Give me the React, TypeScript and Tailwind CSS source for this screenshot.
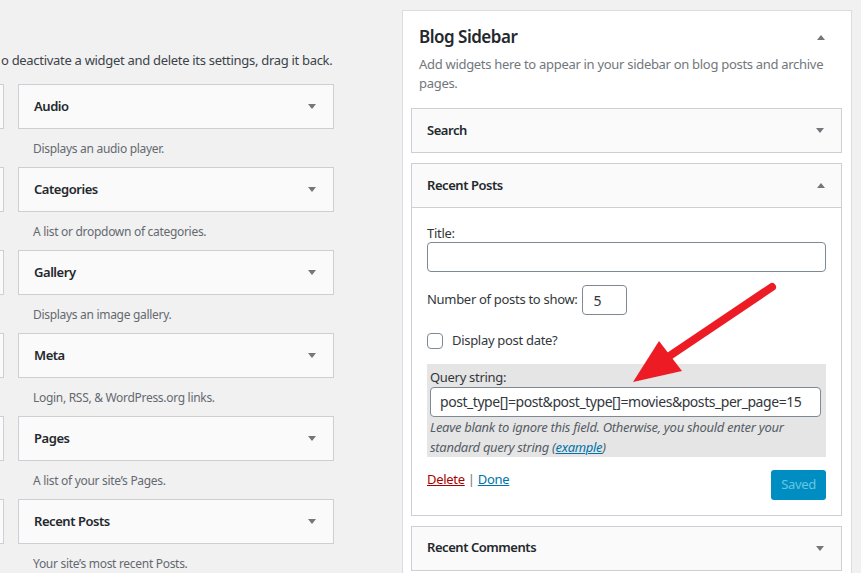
import React from "react";

const font = { fontFamily: '"Noto Sans", "Open Sans", sans-serif' };

function Caret({ up = false }: { up?: boolean }) {
  return (
    <svg width="8" height="5" viewBox="0 0 8 5" className="shrink-0">
      {up ? (
        <polygon points="0,5 8,5 4,0" fill="#72777c" />
      ) : (
        <polygon points="0,0 8,0 4,5" fill="#72777c" />
      )}
    </svg>
  );
}

function WidgetTop({ title, up = false }: { title: string; up?: boolean }) {
  return (
    <div className="h-[45px] flex items-center justify-between pl-[15px] pr-[17px] bg-[#fafafa] border border-[#ccd0d4]">
      <span className="text-[13px] font-semibold tracking-[-0.45px] text-[#23282d]">{title}</span>
      <Caret up={up} />
    </div>
  );
}

const available = [
  { title: "Audio", desc: "Displays an audio player." },
  { title: "Categories", desc: "A list or dropdown of categories." },
  { title: "Gallery", desc: "Displays an image gallery." },
  { title: "Meta", desc: "Login, RSS, & WordPress.org links." },
  { title: "Pages", desc: "A list of your site\u2019s Pages." },
  { title: "Recent Posts", desc: "Your site\u2019s most recent Posts." },
];

export default function App() {
  return (
    <div
      className="relative w-[861px] h-[573px] overflow-hidden bg-[#f1f1f1] flex tracking-[-0.3px]"
      style={font}
    >
      {/* Available widgets (left, cut off) */}
      <div className="w-[402px] shrink-0 overflow-hidden pt-[50px]">
        <p className="text-[13px] leading-[20px] text-[#3c434a] pl-[1px] whitespace-nowrap">
          o deactivate a widget and delete its settings, drag it back.
        </p>
        <div className="mt-[14px] ml-[-298px] flex gap-[14px]">
          {/* left column, only its edge shows */}
          <div className="w-[302px] shrink-0">
            {available.map((w) => (
              <div key={w.title} className="h-[83px]">
                <div className="h-[45px] bg-[#fafafa] border border-[#ccd0d4]" />
              </div>
            ))}
          </div>
          <div className="w-[316px] shrink-0">
            {available.map((w) => (
              <div key={w.title} className="h-[83px]">
                <WidgetTop title={w.title} />
                <p className="pl-[15px] pt-[10px] text-[12px] leading-[19px] text-[#646970] whitespace-nowrap">
                  {w.desc}
                </p>
              </div>
            ))}
          </div>
        </div>
      </div>

      {/* Blog Sidebar */}
      <div className="mt-[10px] w-[450px] shrink-0 self-start bg-white border border-[#dcdcde] pl-[8px] pr-[9px] pb-[20px]">
        <div className="flex items-center justify-between pl-[8px] pr-[17px] pt-[13px]">
          <h2 className="text-[17px] leading-[26px] font-semibold tracking-[-0.5px] text-[#23282d]">
            Blog Sidebar
          </h2>
          <Caret up />
        </div>
        <p className="pl-[8px] pr-[7px] mt-[5px] text-[13px] leading-[19px] text-[#72777c]">
          Add widgets here to appear in your sidebar on blog posts and archive pages.
        </p>

        <div className="mt-[15px]">
          <WidgetTop title="Search" />
        </div>

        <div className="mt-[10px] border border-[#ccd0d4]">
          <div className="h-[44px] flex items-center justify-between pl-[15px] pr-[16px] bg-[#fafafa] border-b border-[#ccd0d4]">
            <span className="text-[13px] font-semibold tracking-[-0.45px] text-[#23282d]">Recent Posts</span>
            <Caret up />
          </div>
          <div className="px-[15px] pt-[16px] pb-[15px] bg-white text-[13px] text-[#32373c]">
            <label className="block leading-[18px]">Title:</label>
            <div className="h-[30px] rounded-[4px] border border-[#7e8993] bg-white" />

            <div className="mt-[13px] flex items-center gap-[4px]">
              <span>Number of posts to show:</span>
              <div className="w-[45px] h-[30px] rounded-[4px] border border-[#7e8993] flex items-center pl-[11px] text-[14px]">
                5
              </div>
            </div>

            <div className="mt-[16px] flex items-center gap-[9px]">
              <div className="w-[16px] h-[16px] rounded-[4px] border border-[#7e8993] bg-white" />
              <span>Display post date?</span>
            </div>

            <div className="mt-[13px] bg-[#e5e5e5] pl-[3px] pr-[5px] pt-[3px]">
              <label className="block leading-[20px]">Query string:</label>
              <div className="h-[30px] rounded-[4px] border border-[#7e8993] bg-white flex items-center pl-[9px] text-[14px] tracking-[-0.45px] text-[#32373c] whitespace-nowrap overflow-hidden">
                post_type[]=post&amp;post_type[]=movies&amp;posts_per_page=15
              </div>
              <p className="italic leading-[20px] text-[#555d66]">
                Leave blank to ignore this field. Otherwise, you should enter your standard
                query string (<span className="text-[#0073aa] underline">example</span>)
              </p>
            </div>

            <div className="mt-[12px] flex items-start justify-between">
              <div className="leading-[20px]">
                <span className="text-[#a00] underline">Delete</span>
                <span className="text-[#72777c]"> | </span>
                <span className="text-[#0073aa] underline">Done</span>
              </div>
              <div className="mt-[1px] h-[30px] px-[10px] rounded-[3px] bg-[#008ec2] text-[#66c6e4] flex items-center text-[13px]">
                Saved
              </div>
            </div>
          </div>
        </div>

        <div className="mt-[10px]">
          <WidgetTop title="Recent Comments" />
        </div>
      </div>

      {/* annotation arrow */}
      <svg className="absolute left-0 top-0 pointer-events-none" width="861" height="573">
        <line x1="772" y1="287" x2="665" y2="359" stroke="#ed1c24" strokeWidth="8" strokeLinecap="round" />
        <polygon points="633,382 659,341 682,371" fill="#ed1c24" />
      </svg>
    </div>
  );
}
